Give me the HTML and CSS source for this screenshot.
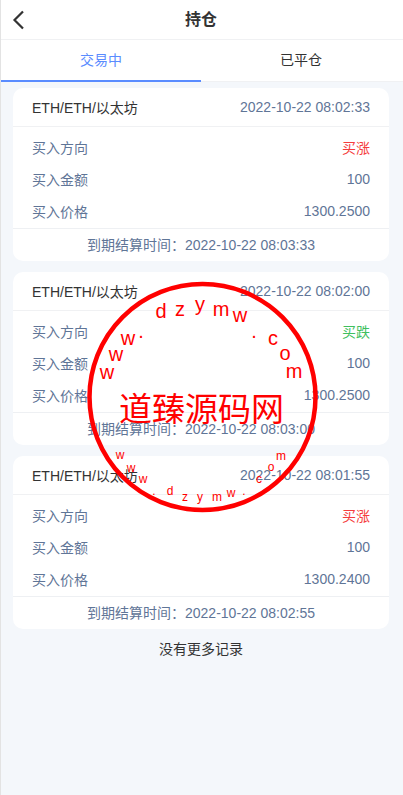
FILE: index.html
```html
<!DOCTYPE html>
<html lang="en">
<head>
    <meta charset="UTF-8">
    <meta name="viewport" content="width=device-width, initial-scale=1.0">
    <title>持仓</title>
    <link rel="stylesheet" href="styles.css">
</head>
<body>
<div class="page">
    <div class="nav-bar">
        <svg class="back-icon" width="13" height="20" viewBox="0 0 13 20"><path d="M11 1.5 L2.5 10 L11 18.5" fill="none" stroke="#333" stroke-width="2.2"/></svg>
        <h3 class="nav-title">持仓</h3>
    </div>
    <div class="tabs">
        <div class="tab tab-active">交易中</div>
        <div class="tab">已平仓</div>
    </div>

    <div class="order-list">
        <div class="order-card">
            <div class="order-head">
                <span class="order-name">ETH/ETH/以太坊</span>
                <span>2022-10-22 08:02:33</span>
            </div>
            <div class="order-body">
                <div class="order-row"><span>买入方向</span><span class="rise">买涨</span></div>
                <div class="order-row"><span>买入金额</span><span>100</span></div>
                <div class="order-row"><span>买入价格</span><span>1300.2500</span></div>
            </div>
            <div class="order-foot">到期结算时间：2022-10-22 08:03:33</div>
        </div>
        <div class="order-card">
            <div class="order-head">
                <span class="order-name">ETH/ETH/以太坊</span>
                <span>2022-10-22 08:02:00</span>
            </div>
            <div class="order-body">
                <div class="order-row"><span>买入方向</span><span class="fall">买跌</span></div>
                <div class="order-row"><span>买入金额</span><span>100</span></div>
                <div class="order-row"><span>买入价格</span><span>1300.2500</span></div>
            </div>
            <div class="order-foot">到期结算时间：2022-10-22 08:03:00</div>
        </div>
        <div class="order-card">
            <div class="order-head">
                <span class="order-name">ETH/ETH/以太坊</span>
                <span>2022-10-22 08:01:55</span>
            </div>
            <div class="order-body">
                <div class="order-row"><span>买入方向</span><span class="rise">买涨</span></div>
                <div class="order-row"><span>买入金额</span><span>100</span></div>
                <div class="order-row"><span>买入价格</span><span>1300.2400</span></div>
            </div>
            <div class="order-foot">到期结算时间：2022-10-22 08:02:55</div>
        </div>
    </div>
    <div class="no-more">没有更多记录</div>
</div>

<!-- watermark stamp, sits over the list -->
<svg class="stamp" width="403" height="795" viewBox="0 0 403 795">
    <circle cx="202.5" cy="397" r="113" fill="none" stroke="#f00" stroke-width="4.5"/>
    <g class="stamp-top" text-anchor="middle">
        <text x="107" y="379">w</text>
        <text x="116" y="361">w</text>
        <text x="128" y="345">w</text>
        <text x="141" y="338">.</text>
        <text x="161" y="318">d</text>
        <text x="180" y="316">z</text>
        <text x="200" y="311">y</text>
        <text x="221" y="316">m</text>
        <text x="240" y="322">w</text>
        <text x="254" y="338">.</text>
        <text x="273" y="345">c</text>
        <text x="285" y="360">o</text>
        <text x="294" y="378">m</text>
    </g>
    <text class="stamp-name" x="201.5" y="421" text-anchor="middle">道臻源码网</text>
    <g class="stamp-bottom" text-anchor="middle">
        <text x="120" y="459">w</text>
        <text x="131" y="472">w</text>
        <text x="143" y="483">w</text>
        <text x="154" y="495">.</text>
        <text x="170" y="495">d</text>
        <text x="185" y="501">z</text>
        <text x="200" y="501">y</text>
        <text x="217" y="501">m</text>
        <text x="231" y="497">w</text>
        <text x="244" y="495">.</text>
        <text x="259" y="483">c</text>
        <text x="271" y="471">o</text>
        <text x="281" y="460">m</text>
    </g>
</svg>
</body>
</html>
```

FILE: styles.css
```css
body {
    margin: 0;
    font-family: "Liberation Sans", "Noto Sans CJK SC", sans-serif;
    font-size: 14px;
    color: #333;
    background: #f4f7fb;
}
.page {
    min-height: 795px;
    border-left: 1px solid #e3e3e3;
}
.nav-bar {
    display: flex;
    align-items: center;
    justify-content: center;
    position: relative;
    height: 36px;
    padding: 0 2px 3px 0;
    background: #fff;
    border-bottom: 1px solid #f0f1f3;
}
.back-icon {
    position: absolute;
    left: 11px;
    top: 10px;
}
.nav-title {
    margin: 0;
    font-size: 16px;
    font-weight: bold;
    color: #333;
}
.tabs {
    display: flex;
    height: 42px;
    padding-right: 2px;
    background: #fff;
    border-bottom: 1px solid #f0f1f3;
    box-sizing: border-box;
}
.tab {
    flex: 1;
    text-align: center;
    line-height: 40px;
    height: 42px;
    box-sizing: border-box;
}
.tab-active {
    color: #5a8cff;
    border-bottom: 2px solid #5a8cff;
}
.order-list {
    display: flex;
    flex-direction: column;
    gap: 11px;
    padding: 6px 14px 0 12px;
}
.order-card {
    height: 173px;
    background: #fff;
    border-radius: 10px;
    color: #5f7597;
}
.order-head {
    display: flex;
    justify-content: space-between;
    align-items: center;
    height: 38px;
    padding: 0 19px;
    border-bottom: 1px solid #f0f1f3;
}
.order-name {
    color: #333;
}
.order-body {
    height: 102px;
    padding-top: 4px;
    box-sizing: border-box;
    border-bottom: 1px solid #eef0f3;
}
.order-row {
    display: flex;
    justify-content: space-between;
    align-items: center;
    height: 32px;
    padding: 0 19px;
}
.order-foot {
    text-align: center;
    line-height: 33px;
}
.rise {
    color: #f53c3c;
}
.fall {
    color: #3fbf5f;
}
.no-more {
    text-align: center;
    line-height: 20px;
    margin-top: 10px;
    padding-right: 2px;
    color: #333;
}
.stamp {
    position: absolute;
    left: 0;
    top: 0;
}
.stamp text {
    fill: #f00;
}
.stamp-top {
    font-size: 20px;
}
.stamp-bottom {
    font-size: 12px;
}
.stamp-name {
    font-size: 33px;
}
```
